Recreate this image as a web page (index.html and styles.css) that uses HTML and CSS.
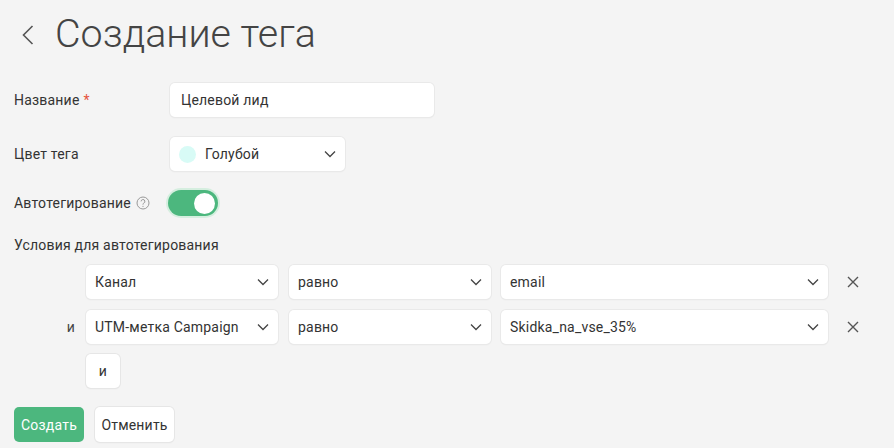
FILE: index.html
```html
<!DOCTYPE html>
<html lang="ru">
<head>
<meta charset="utf-8">
<link rel="stylesheet" href="styles.css">
</head>
<body>
<div class="page">
  <div class="header">
    <svg class="back" width="12" height="20" viewBox="0 0 12 20"><path d="M10.5 1 L1.5 10 L10.5 19" fill="none" stroke="#555" stroke-width="1.6"/></svg>
    <h1 class="title">Создание тега</h1>
  </div>

  <div class="row row-name">
    <div class="label">Название <span class="req">*</span></div>
    <div class="input name-input">Целевой лид</div>
  </div>

  <div class="row row-color">
    <div class="label">Цвет тега</div>
    <div class="input select color-select">
      <span class="dot"></span>
      <span class="sel-text">Голубой</span>
      <svg class="chev" width="12" height="8" viewBox="0 0 12 8"><path d="M1 1.5 L6 6.5 L11 1.5" fill="none" stroke="#444" stroke-width="1.3"/></svg>
    </div>
  </div>

  <div class="row row-auto">
    <div class="label">Автотегирование
      <svg class="help" width="14" height="14" viewBox="0 0 14 14"><circle cx="7" cy="7" r="6" fill="none" stroke="#999" stroke-width="1"/><path d="M5.1 5.4 a1.9 1.9 0 1 1 2.6 1.8 c-0.5 0.2 -0.7 0.5 -0.7 1.1 v0.4" fill="none" stroke="#999" stroke-width="1"/><circle cx="7" cy="10.3" r="0.65" fill="#999"/></svg>
    </div>
    <div class="toggle"><span class="knob"></span></div>
  </div>

  <div class="cond-title">Условия для автотегирования</div>

  <div class="cond-row">
    <div class="conj"></div>
    <div class="input select c1"><span class="sel-text">Канал</span><svg class="chev" width="12" height="8" viewBox="0 0 12 8"><path d="M1 1.5 L6 6.5 L11 1.5" fill="none" stroke="#444" stroke-width="1.3"/></svg></div>
    <div class="input select c2"><span class="sel-text">равно</span><svg class="chev" width="12" height="8" viewBox="0 0 12 8"><path d="M1 1.5 L6 6.5 L11 1.5" fill="none" stroke="#444" stroke-width="1.3"/></svg></div>
    <div class="input select c3"><span class="sel-text">email</span><svg class="chev" width="12" height="8" viewBox="0 0 12 8"><path d="M1 1.5 L6 6.5 L11 1.5" fill="none" stroke="#444" stroke-width="1.3"/></svg></div>
    <svg class="close" width="12" height="12" viewBox="0 0 12 12"><path d="M1 1 L11 11 M11 1 L1 11" fill="none" stroke="#555" stroke-width="1.4"/></svg>
  </div>

  <div class="cond-row">
    <div class="conj">и</div>
    <div class="input select c1"><span class="sel-text">UTM-метка Campaign</span><svg class="chev" width="12" height="8" viewBox="0 0 12 8"><path d="M1 1.5 L6 6.5 L11 1.5" fill="none" stroke="#444" stroke-width="1.3"/></svg></div>
    <div class="input select c2"><span class="sel-text">равно</span><svg class="chev" width="12" height="8" viewBox="0 0 12 8"><path d="M1 1.5 L6 6.5 L11 1.5" fill="none" stroke="#444" stroke-width="1.3"/></svg></div>
    <div class="input select c3"><span class="sel-text">Skidka_na_vse_35%</span><svg class="chev" width="12" height="8" viewBox="0 0 12 8"><path d="M1 1.5 L6 6.5 L11 1.5" fill="none" stroke="#444" stroke-width="1.3"/></svg></div>
    <svg class="close" width="12" height="12" viewBox="0 0 12 12"><path d="M1 1 L11 11 M11 1 L1 11" fill="none" stroke="#555" stroke-width="1.4"/></svg>
  </div>

  <div class="and-row">
    <div class="btn and-btn">и</div>
  </div>

  <div class="actions">
    <div class="btn primary">Создать</div>
    <div class="btn">Отменить</div>
  </div>
</div>
</body>
</html>
```

FILE: styles.css
```css
html, body {
  margin: 0;
  padding: 0;
  background: #f4f4f4;
}
body {
  font-family: Roboto, "Liberation Sans", sans-serif;
  color: #333;
  font-size: 14px;
  letter-spacing: 0.2px;
  width: 894px;
  height: 448px;
  overflow: hidden;
}
.page {
  padding: 0 14px;
  display: flex;
  flex-direction: column;
}
.header {
  display: flex;
  align-items: center;
  height: 48px;
  margin-top: 10px;
}
.back {
  margin-left: 8px;
  margin-top: 1px;
}
.title {
  margin: 0 0 0 21px;
  font-weight: 300;
  font-size: 39.4px;
  line-height: 48px;
  color: #444;
  letter-spacing: 0;
}
.row {
  display: flex;
  align-items: center;
}
.label {
  width: 156px;
  flex: none;
  display: flex;
  align-items: center;
  color: #333;
}
.req {
  color: #e5533d;
  margin-left: 4px;
}
.input {
  background: #fff;
  border-radius: 5px;
  box-shadow: 0 0 0 1px #e9e9e9, 0 1px 2px rgba(0,0,0,0.06);
  height: 34px;
  box-sizing: border-box;
  display: flex;
  align-items: center;
  padding: 0 11px;
  font-size: 14px;
  color: #333;
}
.row-name {
  margin-top: 25px;
}
.name-input {
  width: 264px;
}
.row-color {
  margin-top: 20px;
}
.select {
  justify-content: space-between;
}
.color-select {
  width: 175px;
  justify-content: flex-start;
  padding-left: 9px;
  padding-right: 9px;
}
.color-select .sel-text {
  margin-left: 9px;
  flex: 1;
}
.dot {
  width: 17px;
  height: 17px;
  border-radius: 50%;
  background: #d8fbf6;
}
.chev {
  flex: none;
}
.row-auto {
  margin-top: 18px;
  height: 28px;
}
.help {
  margin-left: 5px;
}
.toggle {
  margin-left: -2px;
  width: 50px;
  height: 26px;
  border-radius: 13px;
  background: #4cb77e;
  box-shadow: 0 0 0 2px #d5eedf;
  display: flex;
  align-items: center;
  justify-content: flex-end;
  padding: 0 3px;
  box-sizing: border-box;
}
.knob {
  width: 21px;
  height: 21px;
  border-radius: 50%;
  background: #fff;
}
.cond-title {
  margin-top: 19px;
  line-height: 18px;
}
.cond-row {
  display: flex;
  align-items: center;
  margin-top: 11px;
}
.cond-title + .cond-row {
  margin-top: 11px;
}
.conj {
  width: 72px;
  flex: none;
  text-align: right;
  padding-right: 11px;
  box-sizing: border-box;
  color: #444;
}
.c1 {
  width: 192px;
  padding-left: 9px;
  padding-right: 9px;
}
.c2 {
  width: 202px;
  margin-left: 11px;
  padding-left: 9px;
  padding-right: 9px;
}
.c3 {
  width: 327px;
  margin-left: 10px;
  padding-left: 9px;
  padding-right: 9px;
}
.close {
  margin-left: 19px;
}
.and-row {
  display: flex;
  margin-top: 10px;
  padding-left: 72px;
}
.btn {
  background: #fff;
  border-radius: 5px;
  box-shadow: 0 0 0 1px #e6e6e6, 0 1px 2px rgba(0,0,0,0.06);
  height: 35px;
  box-sizing: border-box;
  display: flex;
  align-items: center;
  justify-content: center;
  padding: 0 8px;
  font-size: 14px;
  color: #333;
}
.and-btn {
  width: 34px;
  height: 34px;
  padding: 0;
}
.actions {
  display: flex;
  gap: 11px;
  margin-top: 19px;
}
.primary {
  background: #4cb77e;
  color: #fff;
  box-shadow: none;
  width: 70px;
}
.actions .btn:not(.primary) {
  width: 79px;
}
```
